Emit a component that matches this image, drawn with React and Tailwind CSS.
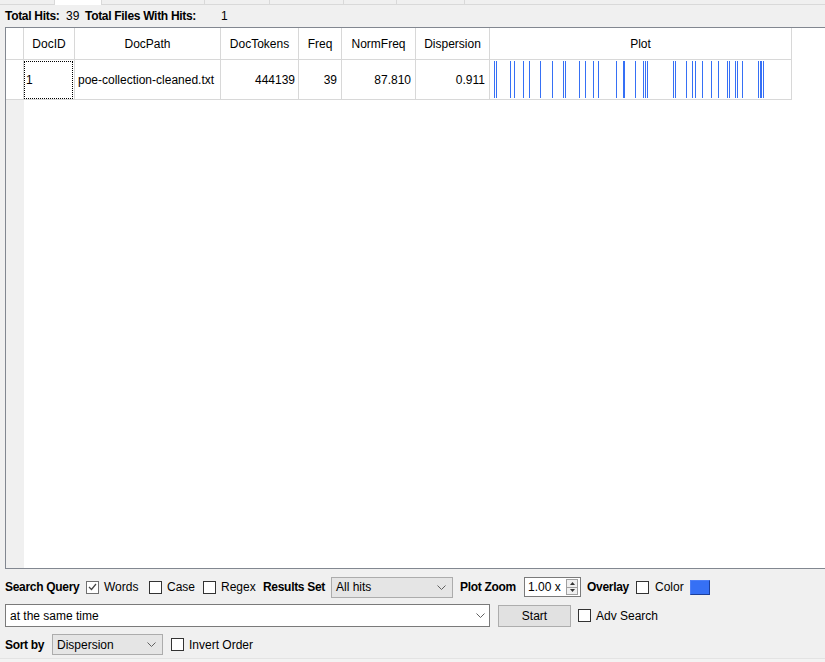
const hits = [4, 6, 20, 24, 33, 39, 50, 62, 73, 75, 89, 95, 103, 108, 126, 133, 134, 145, 153, 155, 157, 183, 185, 196, 202, 205, 212, 221, 228, 237, 239, 245, 247, 252, 268, 270, 271, 273];

function Check({ checked }) {
  return (
    <div className={`w-[13px] h-[13px] bg-white border shrink-0 flex items-center justify-center ${checked ? 'border-[#707070]' : 'border-[#333333]'}`}>
      {checked && (
        <svg width="9" height="8" viewBox="0 0 9 8">
          <polyline points="1,4 3.5,6.5 8,1" fill="none" stroke="#444" strokeWidth="1.2" />
        </svg>
      )}
    </div>
  );
}

function Chevron() {
  return (
    <svg width="9" height="5" viewBox="0 0 9 5" className="shrink-0">
      <polyline points="0.5,0.5 4.5,4.5 8.5,0.5" fill="none" stroke="#606060" strokeWidth="1" />
    </svg>
  );
}

function Select({ value, className }) {
  return (
    <div className={`flex items-center justify-between bg-[#e5e5e5] border border-[#acacac] pl-[4px] pr-[6px] ${className}`}>
      <span>{value}</span>
      <Chevron />
    </div>
  );
}

const cols = [
  { name: 'DocID', w: 'w-[51px]' },
  { name: 'DocPath', w: 'w-[146px]' },
  { name: 'DocTokens', w: 'w-[78px]' },
  { name: 'Freq', w: 'w-[43px]' },
  { name: 'NormFreq', w: 'w-[74px]' },
  { name: 'Dispersion', w: 'w-[74px]' },
  { name: 'Plot', w: 'w-[302px]' },
];

export default function App() {
  return (
    <div className="w-[825px] h-[662px] bg-[#f0f0f0] overflow-hidden flex flex-col text-[12px] text-black font-['Liberation_Sans',Arial,sans-serif]">
      {/* tab strip, mostly cut off */}
      <div className="h-[5px] flex border-b border-[#d9d9d9] shrink-0">
        <div className="w-[55px] border-r border-[#d9d9d9]" />
        <div className="w-[47px] bg-white border-r border-[#d9d9d9] -mb-[1px]" />
        <div className="w-[103px] border-r border-[#d9d9d9]" />
        <div className="w-[65px] border-r border-[#d9d9d9]" />
        <div className="w-[74px] border-r border-[#d9d9d9]" />
        <div className="w-[53px] border-r border-[#d9d9d9]" />
        <div className="w-[68px] border-r border-[#d9d9d9]" />
      </div>

      {/* totals */}
      <div className="h-[22px] flex items-center pl-[5px] shrink-0">
        <span className="w-[61px] font-bold tracking-[-0.3px]">Total Hits:</span>
        <span className="w-[19px]">39</span>
        <span className="w-[136px] font-bold tracking-[-0.3px]">Total Files With Hits:</span>
        <span>1</span>
      </div>

      {/* results table */}
      <div className="ml-[5px] w-[822px] h-[542px] shrink-0 border border-[#828790] bg-white flex">
        <div className="w-[18px] shrink-0 flex flex-col bg-[#f0f0f0]">
          <div className="h-[32px] bg-white border-r border-b border-[#d8d8d8]" />
          <div className="h-[40px] bg-white border-r border-b border-[#d8d8d8]" />
        </div>
        <div className="flex flex-col">
          <div className="flex h-[32px] border-b border-[#d8d8d8]">
            {cols.map((c) => (
              <div key={c.name} className={`${c.w} border-r border-[#d8d8d8] flex items-center justify-center`}>
                {c.name}
              </div>
            ))}
          </div>
          <div className="flex h-[40px] border-b border-[#d8d8d8]">
            <div className="w-[51px] border-r border-[#d8d8d8] pt-[1px] pr-[1px]">
              <div className="h-full border border-dotted border-black flex items-center pl-[1px]">1</div>
            </div>
            <div className="w-[146px] border-r border-[#d8d8d8] flex items-center pl-[3px]">poe-collection-cleaned.txt</div>
            <div className="w-[78px] border-r border-[#d8d8d8] flex items-center justify-end pr-[3px]">444139</div>
            <div className="w-[43px] border-r border-[#d8d8d8] flex items-center justify-end pr-[4px]">39</div>
            <div className="w-[74px] border-r border-[#d8d8d8] flex items-center justify-end pr-[4px]">87.810</div>
            <div className="w-[74px] border-r border-[#d8d8d8] flex items-center justify-end pr-[4px]">0.911</div>
            <div className="w-[302px] border-r border-[#d8d8d8]">
              <svg width="301" height="39" viewBox="0 0 301 39">
                {hits.map((x, i) => (
                  <line key={i} x1={x + 0.5} y1="1" x2={x + 0.5} y2="38" stroke="#3670f5" strokeWidth="1" />
                ))}
              </svg>
            </div>
          </div>
        </div>
      </div>

      {/* controls */}
      <div className="flex flex-col pt-[8px] pl-[5px] gap-[7px]">
        <div className="flex items-center h-[20px]">
          <span className="w-[81px] font-bold tracking-[-0.3px]">Search Query</span>
          <div className="w-[63px] flex items-center gap-[5px]"><Check checked /><span>Words</span></div>
          <div className="w-[54px] flex items-center gap-[5px]"><Check /><span>Case</span></div>
          <div className="w-[60px] flex items-center gap-[5px]"><Check /><span>Regex</span></div>
          <span className="w-[68px] font-bold tracking-[-0.3px]">Results Set</span>
          <Select value="All hits" className="w-[122px] h-[21px]" />
          <span className="ml-[7px] w-[64px] font-bold tracking-[-0.3px]">Plot Zoom</span>
          <div className="w-[57px] h-[20px] bg-white border border-[#7a7a7a] flex items-center justify-between pl-[3px] pr-[2px]">
            <span>1.00 x</span>
            <div className="w-[12px] h-[16px] flex flex-col border border-[#a0a0a0]">
              <div className="flex-1 flex items-center justify-center border-b border-[#a0a0a0] bg-[#f0f0f0]">
                <svg width="5" height="3" viewBox="0 0 5 3"><polygon points="0,3 2.5,0 5,3" fill="#333" /></svg>
              </div>
              <div className="flex-1 flex items-center justify-center bg-[#f0f0f0]">
                <svg width="5" height="3" viewBox="0 0 5 3"><polygon points="0,0 2.5,3 5,0" fill="#333" /></svg>
              </div>
            </div>
          </div>
          <span className="ml-[6px] w-[49px] font-bold tracking-[-0.3px]">Overlay</span>
          <div className="w-[54px] flex items-center gap-[6px]"><Check /><span>Color</span></div>
          <div className="w-[20px] h-[15px] bg-[#3670f5] border border-[#4d7ff7] border-r-[#1c3f99] border-b-[#1c3f99]" />
        </div>

        <div className="flex items-center h-[23px]">
          <div className="w-[485px] h-[23px] bg-white border border-[#7a7a7a] flex items-center justify-between pl-[4px] pr-[4px]">
            <span>at the same time</span>
            <Chevron />
          </div>
          <div className="ml-[8px] w-[73px] h-[22px] bg-[#e1e1e1] border border-[#adadad] flex items-center justify-center">Start</div>
          <div className="ml-[7px] flex items-center gap-[5px]"><Check /><span>Adv Search</span></div>
        </div>

        <div className="flex items-center h-[21px]">
          <span className="w-[47px] font-bold tracking-[-0.3px]">Sort by</span>
          <Select value="Dispersion" className="w-[111px] h-[21px]" />
          <div className="ml-[8px] flex items-center gap-[5px]"><Check /><span>Invert Order</span></div>
        </div>
      </div>
      <div className="mt-auto h-[4px] border-t border-[#e3e3e3] bg-[#f3f3f3]" />
    </div>
  );
}
